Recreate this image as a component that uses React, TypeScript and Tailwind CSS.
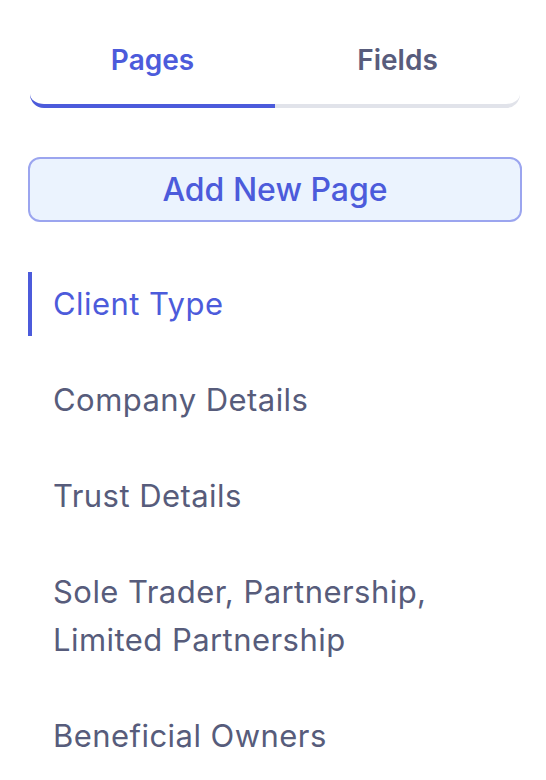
import React from "react";

const items = [
  "Client Type",
  "Company Details",
  "Trust Details",
  "Sole Trader, Partnership, Limited Partnership",
  "Beneficial Owners",
];

export default function App() {
  return (
    <div
      className="w-[546px] h-[780px] bg-white overflow-hidden pl-[28px] pr-[24px]"
      style={{ fontFamily: "Inter, 'Noto Sans', sans-serif" }}
    >
      <div className="flex rounded-b-[14px] border-b-4 border-[#e1e3ea] mx-[2px]">
        <div className="flex-1 pt-[39px] pb-[23px] text-center text-[28px] leading-[42px] font-semibold text-[#4c5bdb] border-b-4 border-[#4c5bdb] -mb-[4px] rounded-bl-[14px]">
          Pages
        </div>
        <div className="flex-1 pt-[39px] pb-[23px] text-center text-[28px] leading-[42px] font-semibold text-[#585c7c]">
          Fields
        </div>
      </div>

      <button className="mt-[49px] w-full h-[65px] rounded-[12px] border-2 border-[#9ba5ef] bg-[#ebf3fe] text-[32px] font-medium text-[#4c5bdb] flex items-center justify-center">
        Add New Page
      </button>

      <div className="mt-[50px] flex flex-col gap-[32px]">
        {items.map((t, i) => (
          <div
            key={t}
            className={
              i === 0
                ? "border-l-4 border-[#4c5bdb] pl-[21px] py-[8px] text-[31px] leading-[48px] tracking-[0.45px] text-[#4c5bdb]"
                : "border-l-4 border-transparent pl-[21px] py-[8px] text-[31px] leading-[48px] tracking-[0.45px] text-[#575c7b] pr-[60px]"
            }
          >
            {t}
          </div>
        ))}
      </div>
    </div>
  );
}
